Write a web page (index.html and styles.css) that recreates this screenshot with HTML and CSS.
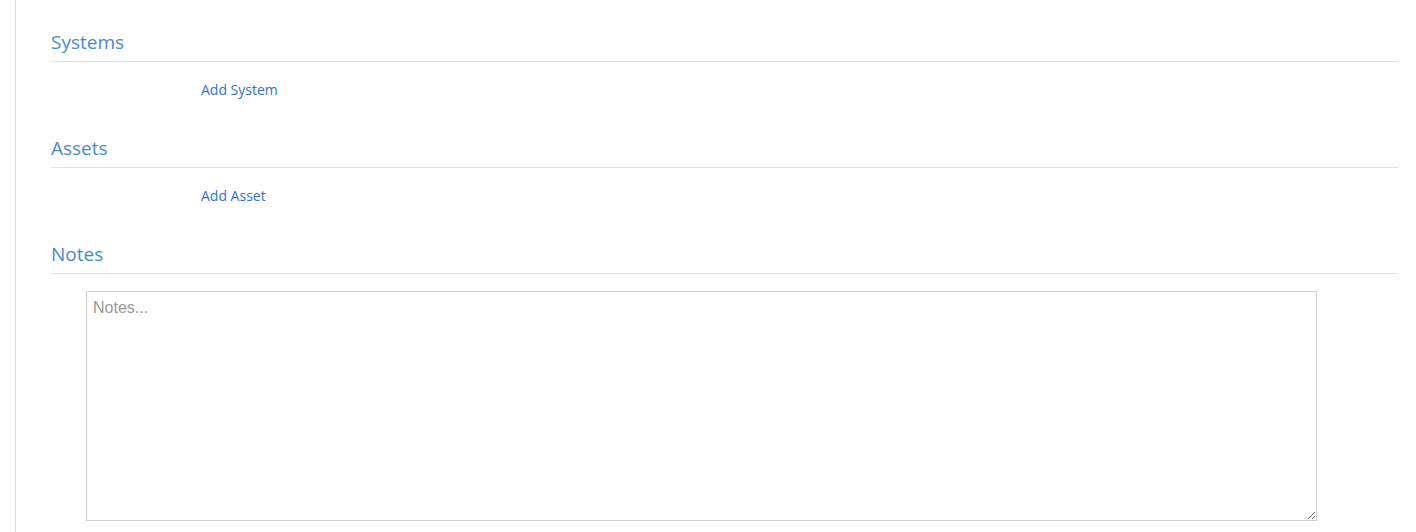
FILE: index.html
```html
<!DOCTYPE html>
<html lang="en">
<head>
    <meta charset="UTF-8">
    <meta name="viewport" content="width=device-width, initial-scale=1.0">
    <title>Record</title>
    <link rel="stylesheet" href="styles.css">
</head>
<body>
    <div class="page">
        <div class="panel">
            <section class="block">
                <h2 class="block-title">Systems</h2>
                <div class="block-actions">
                    <a href="#" class="add-link">Add System</a>
                </div>
            </section>
            <section class="block">
                <h2 class="block-title">Assets</h2>
                <div class="block-actions">
                    <a href="#" class="add-link">Add Asset</a>
                </div>
            </section>
            <section class="block">
                <h2 class="block-title">Notes</h2>
                <div class="notes-wrap">
                    <textarea class="notes" placeholder="Notes..."></textarea>
                </div>
            </section>
        </div>
    </div>
</body>
</html>
```

FILE: styles.css
```css
*,
*::after,
*::before {
    box-sizing: border-box;
}
body {
    margin: 0;
    background: #fff;
    font-family: "Open Sans", "Liberation Sans", sans-serif;
}
.page {
    padding-left: 15px;
}
.panel {
    border-left: 1px solid #dcdcdc;
    padding: 30px 18px 0 35px;
    min-height: 532px;
}
.block-title {
    margin: 0;
    font-size: 19px;
    line-height: 24px;
    font-weight: 400;
    color: #4a89cf;
    padding-bottom: 7px;
    border-bottom: 1px solid #dbe3ea;
}
.block-actions {
    padding: 19px 0 37px 150px;
    font-size: 14px;
    line-height: 18px;
}
.add-link {
    color: #2f74c4;
    text-decoration: none;
}
.notes-wrap {
    padding: 17px 0 0 35px;
}
.notes {
    display: block;
    width: 1231px;
    height: 230px;
    margin: 0;
    padding: 6px;
    border: 1px solid #d0d0d0;
    font-family: "Liberation Sans", Arial, sans-serif;
    font-size: 16px;
    line-height: 20px;
    color: #333;
}
.notes::placeholder {
    color: #9a9794;
}
```
